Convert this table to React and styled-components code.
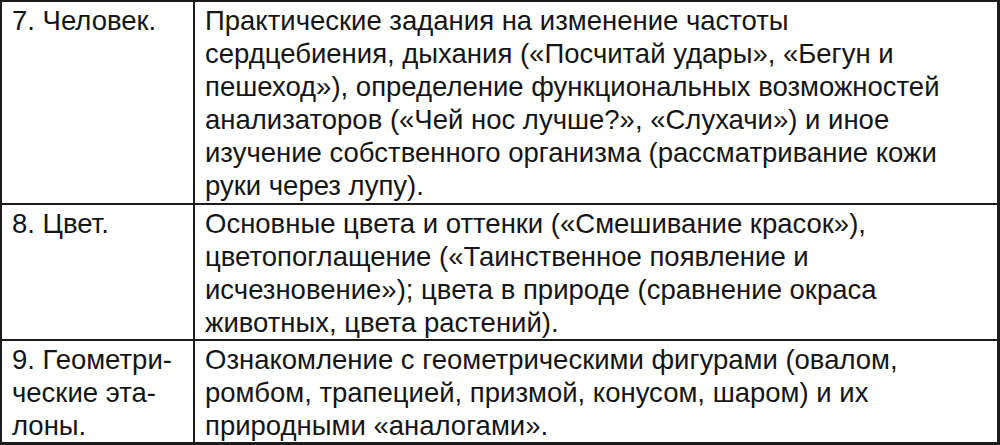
import React from "react";
import styled, { createGlobalStyle } from "styled-components";

const Global = createGlobalStyle`
  html, body { margin: 0; padding: 0; background: #fff; }
  #root { width: 1000px; height: 445px; }
`;

const Table = styled.div`
  box-sizing: border-box;
  width: 1000px;
  height: 445px;
  display: grid;
  grid-template-columns: 191px 1fr;
  grid-template-rows: 201px 136px 1fr;
  border-top: 2px solid #1c1c1c;
  border-left: 2px solid #1c1c1c;
  border-right: 3px solid #1c1c1c;
  border-bottom: 3px solid #1c1c1c;
  font-family: "Liberation Sans", Arial, sans-serif;
  font-size: 27.5px;
  line-height: 33px;
  color: #151515;
`;

const Cell = styled.div`
  box-sizing: border-box;
  padding: 2px 8px 0 10px;
  border-top: ${(p) => (p.$topRule ? "2px solid #1c1c1c" : "none")};
  border-left: ${(p) => (p.$leftRule ? "2px solid #1c1c1c" : "none")};
  white-space: nowrap;
`;

const rows = [
  {
    name: ["7. Человек."],
    text: [
      "Практические задания на изменение частоты",
      "сердцебиения, дыхания («Посчитай удары», «Бегун и",
      "пешеход»), определение функциональных возможностей",
      "анализаторов («Чей нос лучше?», «Слухачи») и иное",
      "изучение собственного организма (рассматривание кожи",
      "руки через лупу).",
    ],
  },
  {
    name: ["8. Цвет."],
    text: [
      "Основные цвета и оттенки («Смешивание красок»),",
      "цветопоглащение («Таинственное появление и",
      "исчезновение»); цвета в природе (сравнение окраса",
      "животных, цвета растений).",
    ],
  },
  {
    name: ["9. Геометри-", "ческие эта-", "лоны."],
    text: [
      "Ознакомление с геометрическими фигурами (овалом,",
      "ромбом, трапецией, призмой, конусом, шаром) и их",
      "природными «аналогами».",
    ],
  },
];

const Lines = ({ lines }) =>
  lines.map((l, i) => (
    <React.Fragment key={i}>
      {l}
      {i < lines.length - 1 && <br />}
    </React.Fragment>
  ));

export default function App() {
  return (
    <>
      <Global />
      <Table>
        {rows.map((r, i) => (
          <React.Fragment key={i}>
            <Cell $topRule={i > 0}>
              <Lines lines={r.name} />
            </Cell>
            <Cell $topRule={i > 0} $leftRule>
              <Lines lines={r.text} />
            </Cell>
          </React.Fragment>
        ))}
      </Table>
    </>
  );
}
